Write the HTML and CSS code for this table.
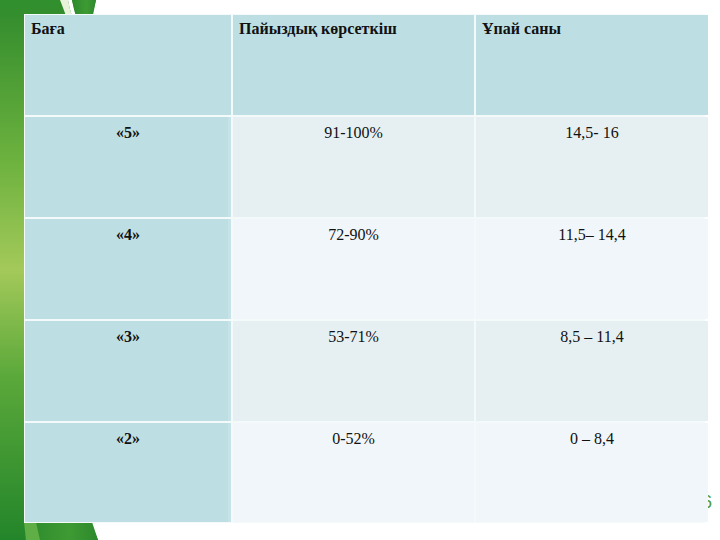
FILE: index.html
```html
<!DOCTYPE html>
<html lang="kk">
<head>
<meta charset="utf-8">
<link rel="stylesheet" href="styles.css">
</head>
<body>
<div class="slide">
  <svg class="deco" width="720" height="540" viewBox="0 0 720 540" aria-hidden="true">
    <defs>
      <linearGradient id="g1" x1="0" y1="0" x2="0" y2="1">
        <stop offset="0" stop-color="#2f8a2c"/>
        <stop offset="0.3" stop-color="#6db23f"/>
        <stop offset="0.5" stop-color="#a3c95a"/>
        <stop offset="0.7" stop-color="#5aa83a"/>
        <stop offset="1" stop-color="#23852a"/>
      </linearGradient>
      <linearGradient id="g2" x1="0" y1="0" x2="1" y2="0">
        <stop offset="0" stop-color="#2c8a2c"/>
        <stop offset="0.6" stop-color="#3e9a33"/>
        <stop offset="1" stop-color="#2d8a2c"/>
      </linearGradient>
    </defs>
    <path d="M0 0 H96 L92 20 L40 20 L40 520 L90 520 L98 540 H0 Z" fill="url(#g1)"/>
    <path d="M0 0 H60 L58 16 H0 Z" fill="#33902e" opacity="0.8"/>
    <path d="M60 0 C62 5 64 10 66 16 L72 16 C70 10 69 5 68 0 Z" fill="#e9f3dc"/>
    <path d="M68 0 C69 5 70 10 72 16 L76 16 C74 10 73 5 72 0 Z" fill="#ffffff"/>
    <path d="M72 0 H96 L92 16 H76 Z" fill="url(#g2)"/>
    <path d="M25 522 H92 L98 540 H25 Z" fill="url(#g2)"/>
    <path d="M24 522 H36 L40 540 H26 Z" fill="#5fae46"/>
  </svg>
  <div class="pagenum">6</div>
  <div class="grid">
    <div class="cell head">Баға</div>
    <div class="cell head">Пайыздық көрсеткіш</div>
    <div class="cell head">Ұпай саны</div>

    <div class="cell mark">«5»</div>
    <div class="cell val odd">91-100%</div>
    <div class="cell val odd">14,5- 16</div>

    <div class="cell mark">«4»</div>
    <div class="cell val even">72-90%</div>
    <div class="cell val even">11,5– 14,4</div>

    <div class="cell mark">«3»</div>
    <div class="cell val odd">53-71%</div>
    <div class="cell val odd">8,5 – 11,4</div>

    <div class="cell mark">«2»</div>
    <div class="cell val even">0-52%</div>
    <div class="cell val even">0 – 8,4</div>
  </div>
</div>
</body>
</html>
```
FILE: styles.css
```css
html, body {
  margin: 0;
  padding: 0;
  background: #ffffff;
}
.slide {
  position: relative;
  width: 720px;
  height: 540px;
  overflow: hidden;
  padding: 14px 15px 0 24px;
  box-sizing: border-box;
  color: #111;
}
.deco {
  position: absolute;
  left: 0;
  top: 0;
  z-index: 0;
}
.pagenum {
  position: absolute;
  left: 702px;
  top: 492px;
  font-family: "Liberation Sans", sans-serif;
  font-size: 18px;
  color: #4f9a3c;
  z-index: 0;
}
.grid {
  position: relative;
  z-index: 1;
  display: grid;
  grid-template-columns: 206px 241px 232px;
  grid-template-rows: 100px 100px 100px 100px 99px;
  gap: 2px;
  padding: 1px;
  width: 681px;
  box-sizing: border-box;
  background: #f4f9fa;
}
.cell {
  font-family: "Liberation Serif", "Times New Roman", "DejaVu Serif", serif;
  font-size: 16px;
  line-height: 18px;
}
.head {
  background: #bddfe4;
  font-weight: bold;
  padding: 5px 6px;
}
.mark {
  background: #bddfe4;
  font-weight: bold;
  text-align: center;
  padding-top: 7px;
  box-shadow: inset -3px 0 0 #c6e3e8;
}
.val {
  text-align: center;
  padding-top: 7px;
}
.odd {
  background: #e6f0f3;
}
.even {
  background: #f0f6f9;
}
```
